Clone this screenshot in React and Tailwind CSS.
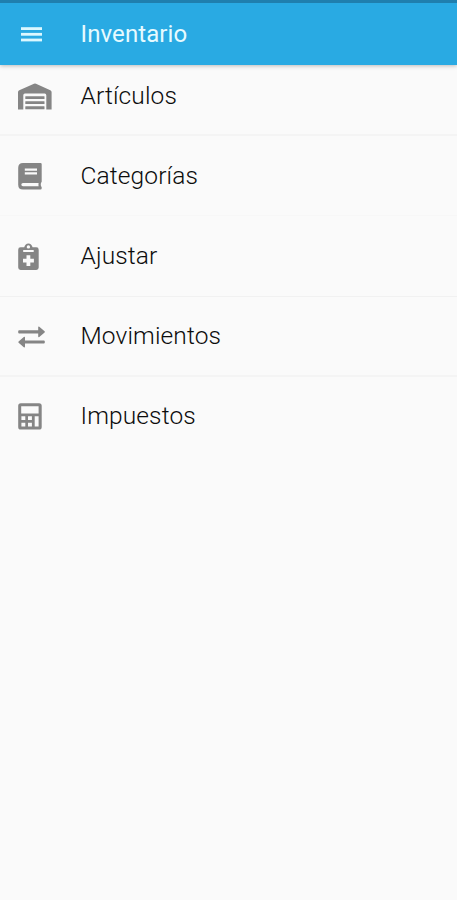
import React from 'react';

function MenuIcon() {
    return (
        <svg viewBox="0 0 21 15" className="w-[21px] h-[15px]" fill="#dcf8ff">
            <rect x="0" y="0.2" width="21" height="2.8" />
            <rect x="0" y="5.9" width="21" height="2.8" />
            <rect x="0" y="11.6" width="21" height="2.8" />
        </svg>
    );
}

function WarehouseIcon() {
    return (
        <svg viewBox="0 0 34 27" className="w-[34px] h-[27px]" fill="currentColor">
            <path d="M0 26.5V9.2Q0 7.8 1.3 7.2L16 .8Q17 .4 18 .8L32.3 7.2Q33.6 7.8 33.6 9.2V26.5H28.3V12.2Q28.3 10.6 26.7 10.6H6.9Q5.3 10.6 5.3 12.2V26.5Z" />
            <rect x="7.3" y="13.2" width="19.2" height="2.9" rx="0.4" />
            <rect x="7.3" y="18.2" width="19.2" height="2.9" rx="0.4" />
            <rect x="7.3" y="23.3" width="19.2" height="3" rx="0.4" />
        </svg>
    );
}

function BookIcon() {
    return (
        <svg viewBox="0 0 24 27" className="w-[24px] h-[27px]" fill="currentColor">
            <path
                fillRule="evenodd"
                d="M5 0H22.5Q23.7 0 23.7 1.2V18.6Q23.7 19.4 23 19.8Q22.5 21.5 23 23.3Q23.7 23.7 23.7 24.4V25.3Q23.7 26.6 22.5 26.6H5Q.2 26.6 .2 21.7V5Q.2 0 5 0ZM6.8 5.6V7.7H19V5.6ZM6.8 9.3V11.4H19V9.3ZM5 19.9Q3.3 19.9 3.3 21.5T5 23.2H20.6Q20.3 21.5 20.6 19.9Z"
            />
        </svg>
    );
}

function ClipboardIcon() {
    return (
        <svg viewBox="0 0 21 28" className="w-[21px] h-[28px]" fill="currentColor">
            <path
                fillRule="evenodd"
                d="M2.6 4.3H6.2Q7.3 .4 10.4 .4T14.6 4.3H18.3Q20.7 4.3 20.7 6.7V24.6Q20.7 27 18.3 27H2.6Q.2 27 .2 24.6V6.7Q.2 4.3 2.6 4.3ZM10.4 2.2A1.7 1.7 0 1 0 10.4 5.6A1.7 1.7 0 1 0 10.4 2.2ZM5.2 7V9H15.7V7ZM8.5 12.2V15.7H5V19.5H8.5V23H12.3V19.5H15.9V15.7H12.3V12.2Z"
            />
        </svg>
    );
}

function ExchangeIcon() {
    return (
        <svg viewBox="0 0 28 22" className="w-[28px] h-[22px]" fill="currentColor">
            <path d="M1.2 4.3H20.2V1.2Q20.2 .2 21.3 .7L26.6 5.3Q27.2 5.9 26.6 6.5L21.3 11Q20.2 11.5 20.2 10.4V7.5H1.2Q.2 7.5 .2 6.5V5.3Q.2 4.3 1.2 4.3Z" />
            <path d="M25.8 14.4H7V11.6Q7 10.4 5.8 11L.6 15.5Q0 16.1 .6 16.7L5.8 21.3Q7 21.8 7 20.6V17.6H25.8Q26.8 17.6 26.8 16.6V15.4Q26.8 14.4 25.8 14.4Z" />
        </svg>
    );
}

function CalculatorIcon() {
    return (
        <svg viewBox="0 0 24 27" className="w-[24px] h-[27px]" fill="currentColor">
            <path
                fillRule="evenodd"
                d="M2.8 .2H21Q23.7 .2 23.7 2.8V23.9Q23.7 26.5 21 26.5H2.8Q.2 26.5 .2 23.9V2.8Q.2 .2 2.8 .2ZM3.2 3.3V10.5H20.6V3.3ZM3.4 13.2V17.1H7.3V13.2ZM10 13.2V17.1H13.9V13.2ZM3.4 19.7V23.6H7.3V19.7ZM10 19.7V23.6H13.9V19.7ZM16.7 13.2V23.6H20.6V13.2Z"
            />
        </svg>
    );
}

const menuItems = [
    { label: 'Artículos', icon: WarehouseIcon, row: 'h-[71px] pb-[7px] border-b-2 border-[#f4f4f4]' },
    { label: 'Categorías', icon: BookIcon, row: 'h-20 pt-px border-b border-[#f7f7f7]' },
    { label: 'Ajustar', icon: ClipboardIcon, row: 'h-[81px] border-b border-[#f1f1f1]' },
    { label: 'Movimientos', icon: ExchangeIcon, row: 'h-20 border-b-2 border-[#f4f4f4]' },
    { label: 'Impuestos', icon: CalculatorIcon, row: 'h-[78px]' },
];

export default function App() {
    return (
        <div className="min-h-screen bg-[#fafafa] font-['Roboto',sans-serif] text-2xl">
            {/* App bar */}
            <header className="h-[65px] flex items-center bg-[#29aae3] border-t-[3px] border-[#1f7fae] pl-[21px] shadow-[0_1px_4px_rgba(0,0,0,0.25)]">
                <div className="w-[59.5px] shrink-0">
                    <MenuIcon />
                </div>
                <h1 className="text-[#e6faff] tracking-[0.1px]">Inventario</h1>
            </header>

            {/* Options */}
            <ul>
                {menuItems.map(({ label, icon: Icon, row }) => (
                    <li key={label} className={`flex items-center pl-[18px] ${row}`}>
                        <div className="w-[62.5px] shrink-0 pt-px text-[#858585]">
                            <Icon />
                        </div>
                        <span className="font-[350] text-[24.5px] text-[#0c0c0c] tracking-[0.13px]">{label}</span>
                    </li>
                ))}
            </ul>
        </div>
    );
}
